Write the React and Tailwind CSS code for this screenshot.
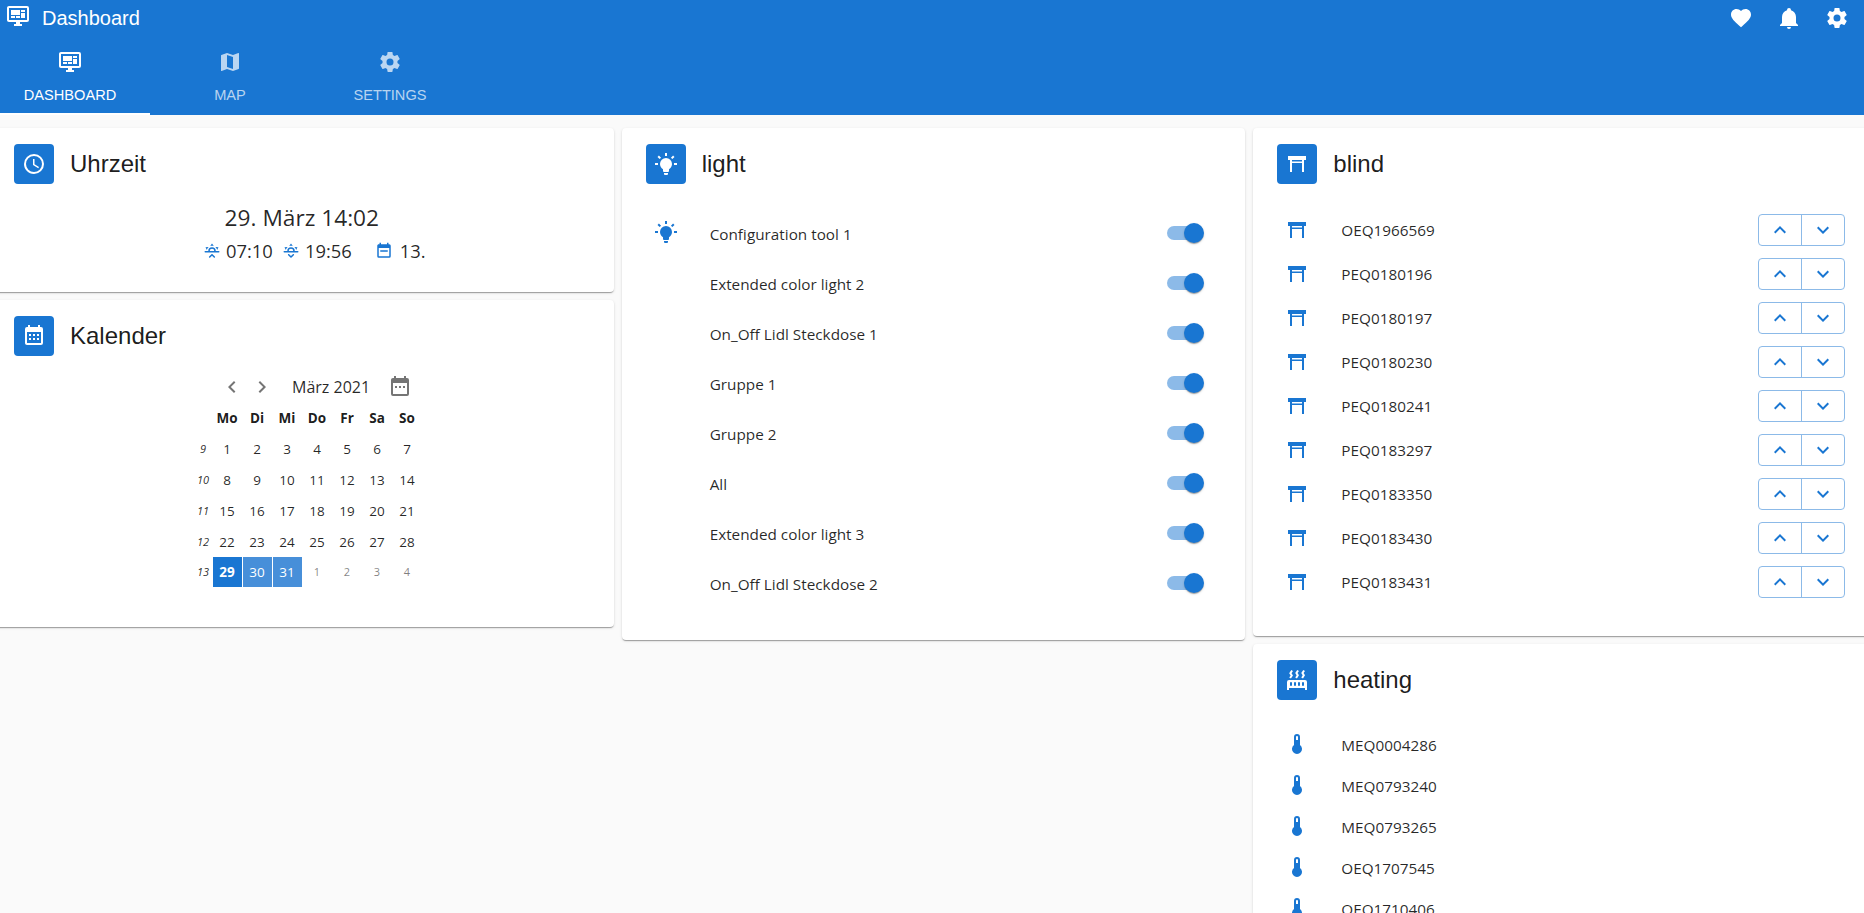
import React from 'react';

const P = {
  dash: 'M21,16V4H3V16H21M21,2A2,2 0 0,1 23,4V16A2,2 0 0,1 21,18H14V20H16V22H8V20H10V18H3C1.89,18 1,17.1 1,16V4C1,2.89 1.89,2 3,2H21M5,6H14V11H5V6M15,6H19V8H15V6M19,9V14H15V9H19M5,12H9V14H5V12M10,12H14V14H10V12Z',
  map: 'M15,19L9,16.89V5L15,7.11M20.5,3C20.44,3 20.39,3 20.34,3L15,5.1L9,3L3.36,4.9C3.15,4.97 3,5.15 3,5.38V20.5A0.5,0.5 0 0,0 3.5,21C3.55,21 3.61,21 3.66,20.97L9,18.9L15,21L20.64,19.1C20.85,19 21,18.85 21,18.62V3.5A0.5,0.5 0 0,0 20.5,3Z',
  cog: 'M12,15.5A3.5,3.5 0 0,1 8.5,12A3.5,3.5 0 0,1 12,8.5A3.5,3.5 0 0,1 15.5,12A3.5,3.5 0 0,1 12,15.5M19.43,12.97C19.47,12.65 19.5,12.33 19.5,12C19.5,11.67 19.47,11.34 19.43,11L21.54,9.37C21.73,9.22 21.78,8.95 21.66,8.73L19.66,5.27C19.54,5.05 19.27,4.96 19.05,5.05L16.56,6.05C16.04,5.66 15.5,5.32 14.87,5.07L14.5,2.42C14.46,2.18 14.25,2 14,2H10C9.75,2 9.54,2.18 9.5,2.42L9.13,5.07C8.5,5.32 7.96,5.66 7.44,6.05L4.95,5.05C4.73,4.96 4.46,5.05 4.34,5.27L2.34,8.73C2.21,8.95 2.27,9.22 2.46,9.37L4.57,11C4.53,11.34 4.5,11.67 4.5,12C4.5,12.33 4.53,12.65 4.57,12.97L2.46,14.63C2.27,14.78 2.21,15.05 2.34,15.27L4.34,18.73C4.46,18.95 4.73,19.03 4.95,18.95L7.44,17.94C7.96,18.34 8.5,18.68 9.13,18.93L9.5,21.58C9.54,21.82 9.75,22 10,22H14C14.25,22 14.46,21.82 14.5,21.58L14.87,18.93C15.5,18.67 16.04,18.34 16.56,17.94L19.05,18.95C19.27,19.03 19.54,18.95 19.66,18.73L21.66,15.27C21.78,15.05 21.73,14.78 21.54,14.63L19.43,12.97Z',
  heart: 'M12,21.35L10.55,20.03C5.4,15.36 2,12.27 2,8.5C2,5.41 4.42,3 7.5,3C9.24,3 10.91,3.81 12,5.08C13.09,3.81 14.76,3 16.5,3C19.58,3 22,5.41 22,8.5C22,12.27 18.6,15.36 13.45,20.03L12,21.35Z',
  bell: 'M21,19V20H3V19L5,17V11C5,7.9 7.03,5.17 10,4.29C10,4.19 10,4.1 10,4A2,2 0 0,1 12,2A2,2 0 0,1 14,4C14,4.1 14,4.19 14,4.29C16.97,5.17 19,7.9 19,11V17L21,19M14,21A2,2 0 0,1 12,23A2,2 0 0,1 10,21',
  clock: 'M12,20A8,8 0 0,0 20,12A8,8 0 0,0 12,4A8,8 0 0,0 4,12A8,8 0 0,0 12,20M12,2A10,10 0 0,1 22,12A10,10 0 0,1 12,22C6.47,22 2,17.5 2,12A10,10 0 0,1 12,2M12.5,7V12.25L17,14.92L16.25,16.15L11,13V7H12.5Z',
  calMonth: 'M9,10V12H7V10H9M13,10V12H11V10H13M17,10V12H15V10H17M19,3A2,2 0 0,1 21,5V19A2,2 0 0,1 19,21H5C3.89,21 3,20.1 3,19V5A2,2 0 0,1 5,3H6V1H8V3H16V1H18V3H19M19,19V8H5V19H19M9,14V16H7V14H9M13,14V16H11V14H13M17,14V16H15V14H17Z',
  bulb: 'M12,6A6,6 0 0,1 18,12C18,14.22 16.79,16.16 15,17.2V19A1,1 0 0,1 14,20H10A1,1 0 0,1 9,19V17.2C7.21,16.16 6,14.22 6,12A6,6 0 0,1 12,6M14,21V22A1,1 0 0,1 13,23H11A1,1 0 0,1 10,22V21H14M20,11H23V13H20V11M1,11H4V13H1V11M13,1V4H11V1H13M4.92,3.5L7.05,5.64L5.63,7.05L3.5,4.93L4.92,3.5M16.95,5.63L19.07,3.5L20.5,4.93L18.37,7.05L16.95,5.63Z',
  blind: 'M3 4h18v4H3zM5 7h2v13H5zM17 7h2v13h-2zM7 9.5h10V11H7z',
  radiator: 'M7.95,3L6.53,5.19L7.95,7.4H7.94L5.95,10.5L4.22,9.6L5.64,7.39L4.22,5.19L6.22,2.09L7.95,3M13.95,2.89L12.53,5.1L13.95,7.3L13.94,7.31L11.95,10.4L10.22,9.5L11.64,7.3L10.22,5.1L12.22,2L13.95,2.89M20,2.89L18.56,5.1L20,7.3V7.31L18,10.4L16.25,9.5L17.67,7.3L16.25,5.1L18.25,2L20,2.89M2,22V14A2,2 0 0,1 4,12H20A2,2 0 0,1 22,14V22H20V20H4V22H2M6,14A1,1 0 0,0 5,15V17A1,1 0 0,0 6,18A1,1 0 0,0 7,17V15A1,1 0 0,0 6,14M10,14A1,1 0 0,0 9,15V17A1,1 0 0,0 10,18A1,1 0 0,0 11,17V15A1,1 0 0,0 10,14M14,14A1,1 0 0,0 13,15V17A1,1 0 0,0 14,18A1,1 0 0,0 15,17V15A1,1 0 0,0 14,14M18,14A1,1 0 0,0 17,15V17A1,1 0 0,0 18,18A1,1 0 0,0 19,17V15A1,1 0 0,0 18,14Z',
  thermo: 'M15 13V5A3 3 0 0 0 9 5V13A5 5 0 1 0 15 13M12 4A1 1 0 0 1 13 5V8H11V5A1 1 0 0 1 12 4Z',
  sunUp: 'M3,12H7A5,5 0 0,1 12,7A5,5 0 0,1 17,12H21A1,1 0 0,1 22,13A1,1 0 0,1 21,14H3A1,1 0 0,1 2,13A1,1 0 0,1 3,12M15,12A3,3 0 0,0 12,9A3,3 0 0,0 9,12H15M12,2L14.39,5.42C13.65,5.15 12.84,5 12,5C11.16,5 10.35,5.15 9.61,5.42L12,2M3.34,7L7.5,6.65C6.9,7.16 6.36,7.78 5.94,8.5C5.5,9.24 5.25,10 5.11,10.79L3.34,7M20.65,7L18.88,10.79C18.74,10 18.47,9.23 18.05,8.5C17.63,7.78 17.1,7.15 16.5,6.64L20.65,7M12.71,16.3L15.82,19.41C16.21,19.8 16.21,20.43 15.82,20.82C15.43,21.21 14.8,21.21 14.41,20.82L12,18.41L9.59,20.82C9.2,21.21 8.57,21.21 8.18,20.82C7.79,20.43 7.79,19.8 8.18,19.41L11.29,16.3C11.5,16.1 11.74,16 12,16C12.26,16 12.5,16.1 12.71,16.3Z',
  sunDown: 'M3,12H7A5,5 0 0,1 12,7A5,5 0 0,1 17,12H21A1,1 0 0,1 22,13A1,1 0 0,1 21,14H3A1,1 0 0,1 2,13A1,1 0 0,1 3,12M15,12A3,3 0 0,0 12,9A3,3 0 0,0 9,12H15M12,2L14.39,5.42C13.65,5.15 12.84,5 12,5C11.16,5 10.35,5.15 9.61,5.42L12,2M3.34,7L7.5,6.65C6.9,7.16 6.36,7.78 5.94,8.5C5.5,9.24 5.25,10 5.11,10.79L3.34,7M20.65,7L18.88,10.79C18.74,10 18.47,9.23 18.05,8.5C17.63,7.78 17.1,7.15 16.5,6.64L20.65,7M12.71,20.71L15.82,17.6C16.21,17.21 16.21,16.57 15.82,16.18C15.43,15.79 14.8,15.79 14.41,16.18L12,18.59L9.59,16.18C9.2,15.79 8.57,15.79 8.18,16.18C7.79,16.57 7.79,17.21 8.18,17.6L11.29,20.71C11.5,20.9 11.74,21 12,21C12.26,21 12.5,20.9 12.71,20.71Z',
  calBar: 'M19,19H5V8H19M19,3H18V1H16V3H8V1H6V3H5C3.89,3 3,3.9 3,5V19A2,2 0 0,0 5,21H19A2,2 0 0,0 21,19V5A2,2 0 0,0 19,3M7,11H17V13H7Z',
  calDots: 'M19,19H5V8H19M19,3H18V1H16V3H8V1H6V3H5C3.89,3 3,3.9 3,5V19A2,2 0 0,0 5,21H19A2,2 0 0,0 21,19V5A2,2 0 0,0 19,3M7,11H9V13H7ZM11,11H13V13H11ZM15,11H17V13H15Z',
  left: 'M15.41,16.58L10.83,12L15.41,7.41L14,6L8,12L14,18L15.41,16.58Z',
  right: 'M8.59,16.58L13.17,12L8.59,7.41L10,6L16,12L10,18L8.59,16.58Z',
  up: 'M7.41,15.41L12,10.83L16.59,15.41L18,14L12,8L6,14L7.41,15.41Z',
  down: 'M7.41,8.59L12,13.17L16.59,8.59L18,10L12,16L6,10L7.41,8.59Z',
};

const UI_FONT = 'font-["Open_Sans",sans-serif]';
const HEAD_FONT = 'font-["Liberation_Sans",sans-serif]';

function Icon({ d, className = '' }) {
  return (
    <svg viewBox="0 0 24 24" className={`w-6 h-6 fill-current shrink-0 ${className}`}>
      <path d={d} />
    </svg>
  );
}

function Card({ icon, title, className = '', children }) {
  return (
    <div className={`bg-white rounded shadow-[0_2px_1px_-1px_rgba(0,0,0,0.2),0_1px_1px_0_rgba(0,0,0,0.14),0_1px_3px_0_rgba(0,0,0,0.12)] ${className}`}>
      <div className="flex items-center pt-4 pl-6 h-14">
        <div className="w-10 h-10 rounded bg-[#1976d2] text-white flex items-center justify-center">
          <Icon d={icon} />
        </div>
        <div className={`ml-4 text-2xl text-black/90 ${HEAD_FONT}`}>{title}</div>
      </div>
      {children}
    </div>
  );
}

function Clock() {
  return (
    <Card icon={P.clock} title="Uhrzeit" className="h-[164px]">
      <div className={`pt-[19px] text-black/85 text-center ${UI_FONT}`}>
        <div className="text-[22.7px] leading-[30px]">29. März 14:02</div>
        <div className="flex items-center justify-center text-[18.4px] leading-6 mt-[6px] pl-[25px]">
          <Icon d={P.sunUp} className="w-[18px] h-[18px] text-[#1976d2] mr-[5px]" />
          <span>07:10</span>
          <Icon d={P.sunDown} className="w-[18px] h-[18px] text-[#1976d2] ml-[9px] mr-[5px]" />
          <span>19:56</span>
          <Icon d={P.calBar} className="w-[18px] h-[18px] text-[#1976d2] ml-[23px] mr-[7px]" />
          <span>13.</span>
        </div>
      </div>
    </Card>
  );
}

const WEEKS = [
  [9, 1, 2, 3, 4, 5, 6, 7],
  [10, 8, 9, 10, 11, 12, 13, 14],
  [11, 15, 16, 17, 18, 19, 20, 21],
  [12, 22, 23, 24, 25, 26, 27, 28],
];

function Calendar() {
  return (
    <Card icon={P.calMonth} title="Kalender" className="h-[327px]">
      <div className={`ml-[207px] pt-[19px] text-black/85 ${UI_FONT}`}>
        <div className="flex items-center h-6 text-[#757575]">
          <Icon d={P.left} className="ml-[23px]" />
          <Icon d={P.right} className="ml-[6px]" />
          <span className="ml-[18px] w-[78px] text-[16px] text-black/85 text-center whitespace-nowrap">März 2021</span>
          <Icon d={P.calDots} className="ml-[18px]" />
        </div>
        <div className="grid grid-cols-[15px_repeat(7,30px)] auto-rows-[31px] items-center justify-items-center mt-[4px] text-[13.5px]">
          <span />
          {['Mo', 'Di', 'Mi', 'Do', 'Fr', 'Sa', 'So'].map((d) => (
            <span key={d} className="font-bold text-black/90">{d}</span>
          ))}
          {WEEKS.map((w) =>
            w.map((n, i) =>
              i === 0 ? (
                <span key={`w${n}`} className="italic text-[11px] -ml-[3px]">{n}</span>
              ) : (
                <span key={`d${n}`}>{n}</span>
              ),
            ),
          )}
          <span className="italic text-[11px] -ml-[3px] -mt-[2px]">13</span>
          <span className="w-[29px] h-[30px] -mt-[3px] bg-[#1976d2] text-white font-bold flex items-center justify-center">29</span>
          <span className="w-[29px] h-[30px] -mt-[3px] bg-[#478fd9] text-white flex items-center justify-center">30</span>
          <span className="w-[29px] h-[30px] -mt-[3px] bg-[#478fd9] text-white flex items-center justify-center">31</span>
          {[1, 2, 3, 4].map((n) => (
            <span key={n} className="text-[11px] -mt-[2px] text-black/50">{n}</span>
          ))}
        </div>
      </div>
    </Card>
  );
}

const LIGHTS = [
  'Configuration tool 1',
  'Extended color light 2',
  'On_Off Lidl Steckdose 1',
  'Gruppe 1',
  'Gruppe 2',
  'All',
  'Extended color light 3',
  'On_Off Lidl Steckdose 2',
];

function Toggle() {
  return (
    <span className="relative block w-[34px] h-[14px] rounded-full bg-[#8cbae8]">
      <span className="absolute -top-[3px] -right-[3px] w-5 h-5 rounded-full bg-[#1976d2] shadow-[0_2px_1px_-1px_rgba(0,0,0,0.2),0_1px_1px_0_rgba(0,0,0,0.14),0_1px_3px_0_rgba(0,0,0,0.12)]" />
    </span>
  );
}

function Lights() {
  return (
    <Card icon={P.bulb} title="light" className="h-[512px]">
      <div className="pt-[24px]">
        {LIGHTS.map((name, i) => (
          <div key={name} className={`flex items-center h-[50px] pl-[32px] pr-[44px] text-[15.3px] text-black/85 ${UI_FONT}`}>
            <span className="w-[56px] shrink-0">
              {i === 0 && <Icon d={P.bulb} className="text-[#1976d2] -mt-[3px]" />}
            </span>
            <span className="flex-1 pt-[3px]">{name}</span>
            <Toggle />
          </div>
        ))}
      </div>
    </Card>
  );
}

const BLINDS = ['OEQ1966569', 'PEQ0180196', 'PEQ0180197', 'PEQ0180230', 'PEQ0180241', 'PEQ0183297', 'PEQ0183350', 'PEQ0183430', 'PEQ0183431'];

function Blinds() {
  return (
    <Card icon={P.blind} title="blind" className="h-[508px]">
      <div className="pt-[24px]">
        {BLINDS.map((name) => (
          <div key={name} className={`flex items-center h-[44px] pl-[32px] text-[15.3px] text-black/85 ${UI_FONT}`}>
            <span className="w-[56px] shrink-0">
              <Icon d={P.blind} className="text-[#1976d2] -mt-[1px]" />
            </span>
            <span className="w-[417px] shrink-0 pt-[1px]">{name}</span>
            <span className="flex h-8 w-[87px] rounded border border-[#8cbae8] text-[#1976d2] divide-x divide-[#8cbae8]">
              <span className="flex-1 flex items-center justify-center"><Icon d={P.up} /></span>
              <span className="flex-1 flex items-center justify-center"><Icon d={P.down} /></span>
            </span>
          </div>
        ))}
      </div>
    </Card>
  );
}

const HEATERS = ['MEQ0004286', 'MEQ0793240', 'MEQ0793265', 'OEQ1707545', 'OEQ1710406'];

function Heating() {
  return (
    <Card icon={P.radiator} title="heating" className="h-[400px]">
      <div className="pt-[25px]">
        {HEATERS.map((name) => (
          <div key={name} className={`flex items-center h-[41px] pl-[32px] text-[15.3px] text-black/85 ${UI_FONT}`}>
            <span className="w-[56px] shrink-0">
              <Icon d={P.thermo} className="text-[#1976d2] -mt-[3px]" />
            </span>
            <span>{name}</span>
          </div>
        ))}
      </div>
    </Card>
  );
}

function Tab({ icon, label, active }) {
  return (
    <div className={`w-40 h-[79px] flex flex-col items-center pt-[14px] border-b-2 text-[14.6px] ${active ? 'border-white text-white' : 'border-transparent text-white/70'}`}>
      <Icon d={icon} />
      <span className="mt-[11px] leading-[20px]">{label}</span>
    </div>
  );
}

export default function App() {
  return (
    <div className={`h-screen overflow-hidden bg-[#fafafa] ${HEAD_FONT}`}>
      <header className="h-[115px] bg-[#1976d2] text-white">
        <div className="h-9 flex items-center pl-[6px] pr-[3px]">
          <Icon d={P.dash} className="-mt-1" />
          <span className="ml-3 text-xl">Dashboard</span>
          <div className="ml-auto flex">
            {[P.heart, P.bell, P.cog].map((d) => (
              <span key={d} className="w-12 flex justify-center"><Icon d={d} /></span>
            ))}
          </div>
        </div>
        <nav className="flex -ml-[10px]">
          <Tab icon={P.dash} label="DASHBOARD" active />
          <Tab icon={P.map} label="MAP" />
          <Tab icon={P.cog} label="SETTINGS" />
        </nav>
      </header>
      <main className="w-[1887px] -ml-[10px] pt-[13px] grid grid-cols-3 gap-2 items-start">
        <div className="flex flex-col gap-2">
          <Clock />
          <Calendar />
        </div>
        <Lights />
        <div className="flex flex-col gap-2">
          <Blinds />
          <Heating />
        </div>
      </main>
    </div>
  );
}
